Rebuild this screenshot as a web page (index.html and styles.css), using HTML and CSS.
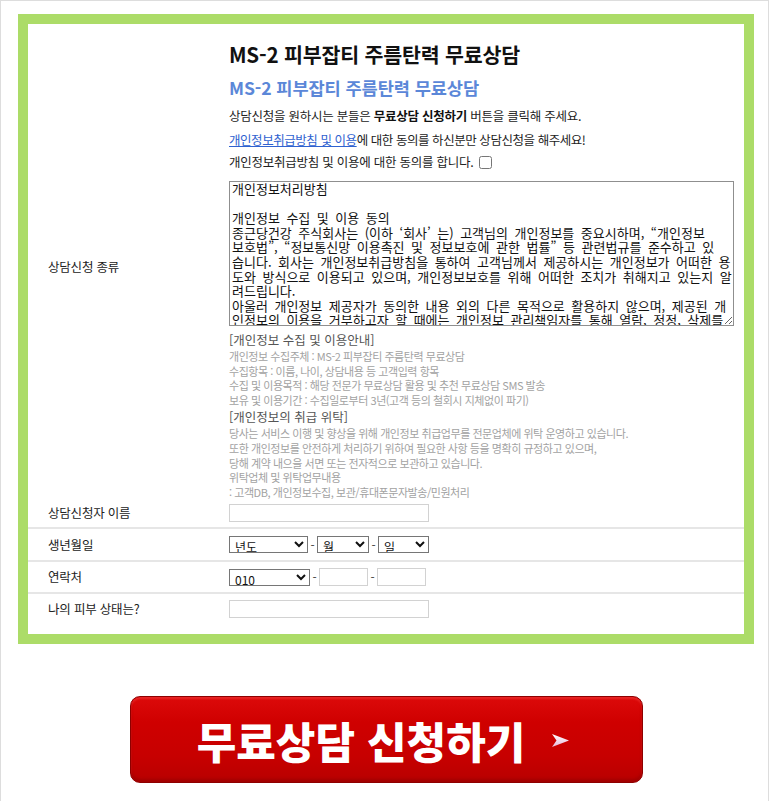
FILE: index.html
```html
<!DOCTYPE html>
<html lang="ko">
<head>
<meta charset="utf-8">
<title>MS-2 피부잡티 주름탄력 무료상담</title>
<link rel="stylesheet" href="styles.css">
</head>
<body>
<div class="page">
  <div class="formbox">
    <div class="row row-main">
      <div class="label label-main">상담신청 종류</div>
      <div class="field field-main">
        <h1 class="title">MS-2 피부잡티 주름탄력 무료상담</h1>
        <h2 class="subtitle">MS-2 피부잡티 주름탄력 무료상담</h2>
        <p class="notice n1">상담신청을 원하시는 분들은 <b>무료상담 신청하기</b> 버튼을 클릭해 주세요.</p>
        <p class="notice n2"><a href="#" class="link">개인정보취급방침 및 이용</a>에 대한 동의를 하신분만 상담신청을 해주세요!</p>
        <p class="notice n3"><label>개인정보취급방침 및 이용에 대한 동의를 합니다. <input type="checkbox" class="agree"></label></p>
        <textarea class="policy" wrap="off" readonly>개인정보처리방침

개인정보 수집 및 이용 동의
종근당건강 주식회사는 (이하 ‘회사’ 는) 고객님의 개인정보를 중요시하며, “개인정보
보호법”, “정보통신망 이용촉진 및 정보보호에 관한 법률” 등 관련법규를 준수하고 있
습니다. 회사는 개인정보취급방침을 통하여 고객님께서 제공하시는 개인정보가 어떠한 용
도와 방식으로 이용되고 있으며, 개인정보보호를 위해 어떠한 조치가 취해지고 있는지 알
려드립니다.
아울러 개인정보 제공자가 동의한 내용 외의 다른 목적으로 활용하지 않으며, 제공된 개
인정보의 이용을 거부하고자 할 때에는 개인정보 관리책임자를 통해 열람, 정정, 삭제를
요구할 수 있습니다.</textarea>
        <div class="info">
          <div class="info-head">[개인정보 수집 및 이용안내]</div>
          <div class="info-line">개인정보 수집주체 : MS-2 피부잡티 주름탄력 무료상담</div>
          <div class="info-line">수집항목 : 이름, 나이, 상담내용 등 고객입력 항목</div>
          <div class="info-line">수집 및 이용목적 : 해당 전문가 무료상담 활용 및 추천 무료상담 SMS 발송</div>
          <div class="info-line">보유 및 이용기간 : 수집일로부터 3년(고객 등의 철회시 지체없이 파기)</div>
          <div class="info-head info-head2">[개인정보의 취급 위탁]</div>
          <div class="info-line">당사는 서비스 이행 및 향상을 위해 개인정보 취급업무를 전문업체에 위탁 운영하고 있습니다.</div>
          <div class="info-line">또한 개인정보를 안전하게 처리하기 위하여 필요한 사항 등을 명확히 규정하고 있으며,</div>
          <div class="info-line">당해 계약 내으을 서면 또는 전자적으로 보관하고 있습니다.</div>
          <div class="info-line">위탁업체 및 위탁업무내용</div>
          <div class="info-line">: 고객DB, 개인정보수집, 보관/휴대폰문자발송/민원처리</div>
        </div>
      </div>
    </div>
    <div class="row row-sep row-name">
      <div class="label">상담신청자 이름</div>
      <div class="field"><input type="text" class="text wide"></div>
    </div>
    <div class="row row-sep row-birth">
      <div class="label">생년월일</div>
      <div class="field inline">
        <select class="sel sel-year"><option>년도</option></select><span class="dash">-</span><select class="sel sel-month"><option>월</option></select><span class="dash">-</span><select class="sel sel-day"><option>일</option></select>
      </div>
    </div>
    <div class="row row-sep row-phone">
      <div class="label">연락처</div>
      <div class="field inline">
        <select class="sel sel-phone"><option>010</option></select><span class="dash">-</span><input type="text" class="text short"><span class="dash dash-gap">-</span><input type="text" class="text short"></div>
    </div>
    <div class="row row-last">
      <div class="label">나의 피부 상태는?</div>
      <div class="field"><input type="text" class="text wide"></div>
    </div>
  </div>
  <div class="cta-wrap">
    <a href="#" class="cta">
      <span class="cta-text">무료상담 신청하기</span>
      <svg class="cta-arrow" width="17" height="13" viewBox="0 0 17 13" aria-hidden="true">
        <defs>
          <linearGradient id="ag" x1="0" y1="0" x2="0" y2="1">
            <stop offset="0" stop-color="#ffffff"/>
            <stop offset="1" stop-color="#e6b8d8"/>
          </linearGradient>
        </defs>
        <polygon points="0,0 17,6.5 0,13 4.5,6.5" fill="url(#ag)"/>
      </svg>
    </a>
  </div>
</div>
</body>
</html>
```

FILE: styles.css
```css
html, body {
  margin: 0;
  padding: 0;
  background: #ffffff;
}

body {
  font-family: "Noto Sans CJK KR", "Noto Sans", sans-serif;
  color: #222222;
}

.page {
  box-sizing: border-box;
  width: 769px;
  border: 1px solid #dddddd;
  padding: 13px 13px 30px 17px;
}

.formbox {
  box-sizing: border-box;
  width: 736px;
  border: 10px solid #acdc68;
  background: #ffffff;
  padding-bottom: 11px;
}

.row {
  display: grid;
  grid-template-columns: 201px 1fr;
  align-items: center;
}

.row-sep {
  border-bottom: 2px solid #e6e6e6;
}

.label {
  padding-left: 20px;
  font-size: 12.5px;
  letter-spacing: -0.2px;
  line-height: 16px;
  color: #222222;
}

.label-main {
  padding-top: 10px;
}

.field-main {
  padding-top: 18px;
}

.title {
  margin: 0;
  font-size: 20.6px;
  line-height: 24px;
  font-weight: 700;
  color: #111111;
  letter-spacing: -0.2px;
}

.subtitle {
  margin: 11px 0 0;
  font-size: 17.6px;
  line-height: 22px;
  font-weight: 700;
  color: #5b87d8;
  letter-spacing: -0.1px;
}

.notice {
  margin: 0;
  font-size: 12.5px;
  line-height: 16px;
  letter-spacing: -0.25px;
  color: #222222;
}

.notice b {
  font-weight: 700;
  color: #111111;
}

.n1 { margin-top: 9px; }
.n2 { margin-top: 8px; letter-spacing: -0.45px; }
.n3 { margin-top: 6px; }

.link {
  color: #2f62d0;
  text-decoration: underline;
}

.agree {
  width: 13px;
  height: 13px;
  margin: 0 0 0 2px;
  vertical-align: -2px;
}

.policy {
  display: block;
  box-sizing: border-box;
  width: 505px;
  height: 145px;
  margin: 11px 0 0;
  padding: 0 2px;
  border: 1px solid #8f8f8f;
  font-family: "Noto Sans CJK KR", "Noto Sans", sans-serif;
  font-size: 13px;
  line-height: 14.6px;
  word-spacing: 2.9px;
  color: #111111;
  background: #ffffff;
  overflow: hidden;
  white-space: pre;
}

.info {
  padding-top: 5px;
  padding-bottom: 0;
}

.info-head {
  font-size: 12.5px;
  line-height: 18px;
  letter-spacing: 0;
  color: #555555;
}

.info-head2 {
  margin-top: 1px;
}

.info-line {
  font-size: 11px;
  line-height: 14.6px;
  letter-spacing: -0.45px;
  color: #a2a2a2;
}

.row-name {
  height: 28px;
}

.row-birth {
  height: 31px;
}

.row-phone {
  height: 30px;
}

.row-last {
  height: 29px;
}

.field {
  display: flex;
  align-items: center;
}

.field-main {
  display: block;
}

.text {
  box-sizing: border-box;
  height: 18px;
  margin: 0;
  padding: 0 3px;
  border: 1px solid #d2d2d2;
  background: #ffffff;
  font-size: 12px;
}

.wide {
  width: 200px;
}

.short {
  width: 49px;
}

.sel {
  box-sizing: border-box;
  height: 17px;
  margin: 0;
  padding: 0 0 0 1px;
  border: 1px solid #767676;
  border-radius: 0;
  background: #ffffff;
  font-family: "Noto Sans CJK KR", "Noto Sans", sans-serif;
  font-size: 12px;
  color: #111111;
}

.sel-year { width: 79px; }
.sel-month { width: 52px; }
.sel-day { width: 51px; }
.sel-phone { width: 81px; }

.dash {
  display: inline-block;
  width: 9px;
  text-align: center;
  font-size: 12px;
  line-height: 16px;
  color: #444444;
}

.dash-gap {
  width: 9px;
}

.cta-wrap {
  display: flex;
  justify-content: center;
  padding-top: 52px;
}

.cta {
  box-sizing: border-box;
  width: 513px;
  height: 87px;
  display: flex;
  align-items: center;
  justify-content: center;
  gap: 27px;
  border: 1px solid #8e0000;
  border-radius: 10px;
  background: linear-gradient(180deg, #dc0a0a 0%, #cf0000 30%, #c70000 70%, #b80000 100%);
  box-shadow: inset 0 2px 2px rgba(255, 90, 90, 0.35), inset 0 -3px 3px rgba(120, 0, 0, 0.35);
  text-decoration: none;
  padding-right: 7px;
}

.cta-text {
  font-family: "Noto Sans CJK KR", "Noto Sans", sans-serif;
  font-size: 43px;
  font-weight: 900;
  line-height: 48px;
  color: #ffffff;
  letter-spacing: 0;
}

.cta-arrow {
  display: block;
  margin-top: 2px;
}
```
